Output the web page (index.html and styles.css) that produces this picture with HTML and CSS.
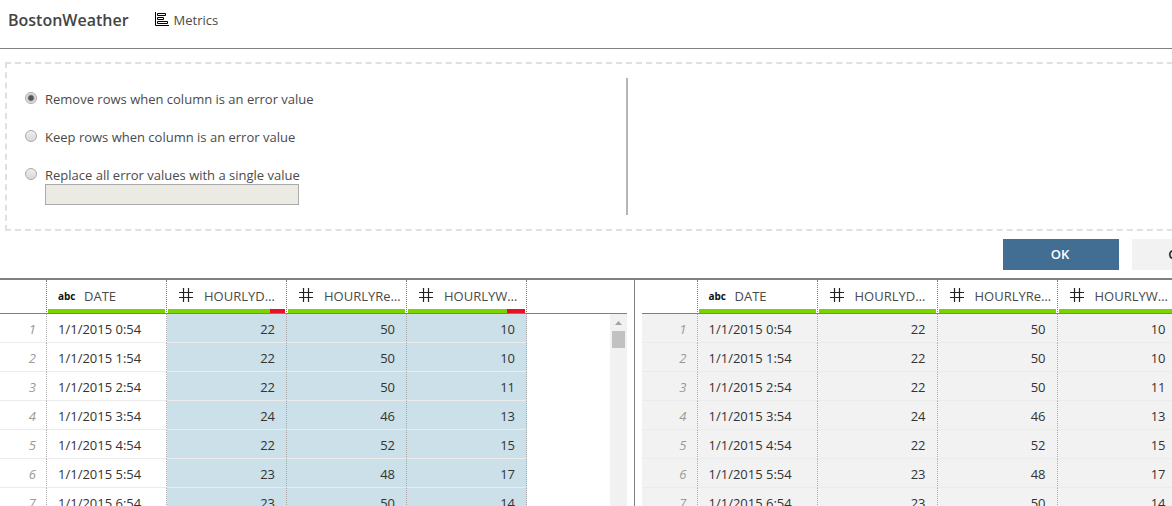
FILE: index.html
```html
<!DOCTYPE html>
<html lang="en">
<head>
<meta charset="utf-8">
<title>BostonWeather</title>
<link rel="stylesheet" href="styles.css">
</head>
<body>
<svg class="sprite" aria-hidden="true">
  <symbol id="hash" viewBox="0 0 14 14"><path d="M4.5 0v14M9.5 0v14M0 4.5h14M0 9.5h14" fill="none" stroke="#222" stroke-width="1.2"/></symbol>
</svg>
<div class="page">
  <header class="topbar">
    <h1 class="title">BostonWeather</h1>
    <button type="button" class="metrics">
      <svg class="metrics-icon" width="14" height="14" viewBox="0 0 14 14" fill="none" stroke="#000" aria-hidden="true"><path d="M.5 0v13.5H14M2.5 1.5h8v2h-8zM2.5 5.5h6v2h-6zM2.5 9.5h10v2h-10z"/></svg>
      Metrics
    </button>
  </header>
  <form class="options">
    <fieldset class="choices">
      <div class="choice"><input type="radio" name="mode" id="remove" class="radio" checked><label for="remove">Remove rows when column is an error value</label></div>
      <div class="choice"><input type="radio" name="mode" id="keep" class="radio"><label for="keep">Keep rows when column is an error value</label></div>
      <div class="choice"><input type="radio" name="mode" id="replace" class="radio"><label for="replace">Replace all error values with a single value</label></div>
      <input type="text" class="value" aria-label="Replacement value" disabled>
    </fieldset>
    <div class="notes"></div>
  </form>
  <div class="actions">
    <button type="button" class="button primary">OK</button>
    <button type="button" class="button">Cancel</button>
  </div>
  <main class="panes">
    <section class="pane source">
      <table class="grid">
        <thead><tr>
          <th class="index"></th>
          <th class="col"><div class="head"><span class="abc">abc</span><span class="name">DATE</span></div><div class="bar"></div></th>
          <th class="col"><div class="head"><svg class="hash"><use href="#hash"/></svg><span class="name">HOURLYDRYBULB</span></div><div class="bar"><div class="errors" style="width:13%"></div></div></th>
          <th class="col"><div class="head"><svg class="hash"><use href="#hash"/></svg><span class="name">HOURLYRelHumidity</span></div><div class="bar"></div></th>
          <th class="col"><div class="head"><svg class="hash"><use href="#hash"/></svg><span class="name">HOURLYWETBULB</span></div><div class="bar"><div class="errors" style="width:15%"></div></div></th>
          <th class="rest"></th>
        </tr></thead>
        <tbody>
          <tr><td class="index">1</td><td>1/1/2015 0:54</td><td class="num">22</td><td class="num">50</td><td class="num">10</td><td class="rest" rowspan="7"><div class="scroll"><svg width="7" height="4" viewBox="0 0 7 4"><path d="M0 4L3.5 0 7 4z" fill="#a3a3a3"/></svg><div class="thumb"></div></div></td></tr>
          <tr><td class="index">2</td><td>1/1/2015 1:54</td><td class="num">22</td><td class="num">50</td><td class="num">10</td></tr>
          <tr><td class="index">3</td><td>1/1/2015 2:54</td><td class="num">22</td><td class="num">50</td><td class="num">11</td></tr>
          <tr><td class="index">4</td><td>1/1/2015 3:54</td><td class="num">24</td><td class="num">46</td><td class="num">13</td></tr>
          <tr><td class="index">5</td><td>1/1/2015 4:54</td><td class="num">22</td><td class="num">52</td><td class="num">15</td></tr>
          <tr><td class="index">6</td><td>1/1/2015 5:54</td><td class="num">23</td><td class="num">48</td><td class="num">17</td></tr>
          <tr><td class="index">7</td><td>1/1/2015 6:54</td><td class="num">23</td><td class="num">50</td><td class="num">14</td></tr>
        </tbody>
      </table>
    </section>
    <section class="pane preview">
      <table class="grid">
        <thead><tr>
          <th class="index"></th>
          <th class="col"><div class="head"><span class="abc">abc</span><span class="name">DATE</span></div><div class="bar"></div></th>
          <th class="col"><div class="head"><svg class="hash"><use href="#hash"/></svg><span class="name">HOURLYDRYBULB</span></div><div class="bar"></div></th>
          <th class="col"><div class="head"><svg class="hash"><use href="#hash"/></svg><span class="name">HOURLYRelHumidity</span></div><div class="bar"></div></th>
          <th class="col"><div class="head"><svg class="hash"><use href="#hash"/></svg><span class="name">HOURLYWETBULB</span></div><div class="bar"></div></th>
          <th class="rest"></th>
        </tr></thead>
        <tbody>
          <tr><td class="index">1</td><td>1/1/2015 0:54</td><td class="num">22</td><td class="num">50</td><td class="num">10</td></tr>
          <tr><td class="index">2</td><td>1/1/2015 1:54</td><td class="num">22</td><td class="num">50</td><td class="num">10</td></tr>
          <tr><td class="index">3</td><td>1/1/2015 2:54</td><td class="num">22</td><td class="num">50</td><td class="num">11</td></tr>
          <tr><td class="index">4</td><td>1/1/2015 3:54</td><td class="num">24</td><td class="num">46</td><td class="num">13</td></tr>
          <tr><td class="index">5</td><td>1/1/2015 4:54</td><td class="num">22</td><td class="num">52</td><td class="num">15</td></tr>
          <tr><td class="index">6</td><td>1/1/2015 5:54</td><td class="num">23</td><td class="num">48</td><td class="num">17</td></tr>
          <tr><td class="index">7</td><td>1/1/2015 6:54</td><td class="num">23</td><td class="num">50</td><td class="num">14</td></tr>
        </tbody>
      </table>
    </section>
  </main>
</div>
</body>
</html>
```

FILE: styles.css
```css
* { box-sizing: border-box; }
body {
  margin: 0;
  height: 100vh;
  overflow: hidden;
  background: #fff;
  color: #4a4a4a;
  font: 13px/18px "Open Sans", "Noto Sans", sans-serif;
}
button, input { font: inherit; color: inherit; }
.sprite { display: none; }
.page { width: calc(100% + 96px); }

.topbar {
  display: flex;
  align-items: center;
  gap: 26px;
  padding: 8px 8px 16px;
  border-bottom: 1px solid #808080;
}
.title { margin: 0; font-size: 16px; line-height: 24px; font-weight: 600; color: #444; }
.metrics {
  display: flex;
  align-items: center;
  gap: 5px;
  padding: 0;
  border: 0;
  background: none;
}
.metrics-icon { margin-bottom: 2px; }

.options {
  display: flex;
  margin: 13px 5px 8px;
  padding: 14px 18px;
  border: 2px dashed #e0e0e0;
}
.choices {
  flex: 1;
  margin: 0 14px 0 0;
  padding: 12px 0 10px;
  border: 0;
  border-right: 2px solid #b5b5b5;
}
.notes { flex: 1; }
.choice { display: flex; align-items: center; gap: 8px; margin-bottom: 20px; }
.choice:nth-child(3) { margin-bottom: 0; }
.radio {
  appearance: none;
  width: 12px;
  height: 12px;
  margin: 0 0 2px;
  border: 1px solid #aaa;
  border-radius: 50%;
  background: linear-gradient(#eee, #d8d8d8);
}
.radio:checked { background: radial-gradient(circle, #555 0 2px, #e2e2e2 4px); }
.value {
  display: block;
  width: 254px;
  height: 21px;
  margin: 0 0 0 20px;
  border: 1px solid #aaa;
  background: #ebebe4;
}

.actions { display: flex; justify-content: flex-end; gap: 13px; padding: 0 20px 8px; }
.button {
  width: 116px;
  height: 31px;
  padding: 0 2px 2px 0;
  border: 0;
  background: #f2f2f2;
  color: #222;
  font-weight: 600;
}
.primary { background: #426e93; color: #fff; }

.panes { display: flex; border-top: 2px solid #808080; }
.pane { flex: 1; min-width: 0; }
.source { padding-right: 7px; }
.preview { padding-left: 7px; border-left: 1px solid #808080; }

.grid { width: 100%; table-layout: fixed; border-spacing: 0; }
.grid th { height: 34px; padding: 0; border-bottom: 1px solid #808080; font-weight: 400; vertical-align: bottom; }
.grid th.index, .grid th.col { border-right: 1px dotted #808080; }
.grid th.index { width: 47px; }
.preview .grid th.index { width: 56px; }
.grid th.col { width: 120px; }
.head { display: flex; align-items: center; height: 29px; padding: 3px 5px 0 11px; }
.name { flex: 1; min-width: 0; overflow: hidden; text-overflow: ellipsis; white-space: nowrap; text-align: left; }
.abc { width: 26px; padding-bottom: 1px; text-align: left; font-size: 10px; font-weight: 700; color: #111; }
.hash { flex: none; width: 14px; height: 14px; margin: 0 11px 2px 1px; }
.bar { display: flex; justify-content: flex-end; height: 4px; margin: 0 1px; background: #7bd300; }
.errors { background: #e81123; }

.grid td { height: 29px; padding: 2px 11px 0; border-right: 1px dotted #aaa; border-bottom: 1px solid #ebebeb; color: #333; white-space: nowrap; }
.grid td.index { padding-right: 10px; text-align: right; font-style: italic; color: #999; }
.grid td.num { text-align: right; }
.source .num { background: #cbe0e8; }
.preview td { background: #f2f2f2; }
.grid td.rest { height: 100%; padding: 0; border: 0; vertical-align: top; }
.scroll {
  display: flex;
  flex-direction: column;
  align-items: center;
  gap: 6px;
  width: 17px;
  height: 203px;
  margin-left: auto;
  padding-top: 7px;
  background: #f1f1f1;
}
.thumb { width: 13px; height: 17px; background: #c1c1c1; }
```
